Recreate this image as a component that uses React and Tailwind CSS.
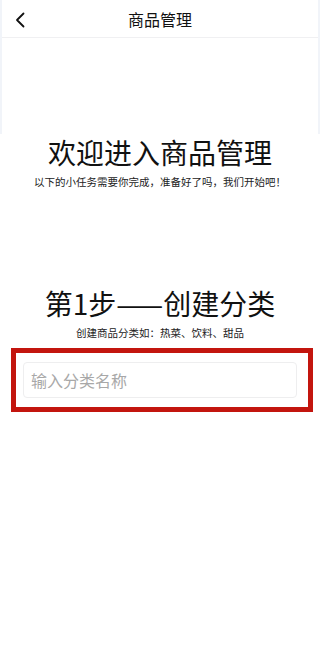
export default function App() {
  const font = { fontFamily: '"Noto Sans CJK SC", "Noto Sans", sans-serif' };

  return (
    <div className="w-[320px] min-h-[646px] bg-white text-[#111]" style={font}>
      {/* top area with faint frame */}
      <div className="border-x-2 border-[#f1f4f9]">
        <div className="relative h-[38px] flex items-center justify-center border-b border-[#f0f0f2]">
          <button className="absolute left-[12px] top-[12px] text-[#111]">
            <svg width="12" height="16" viewBox="0 0 12 16" fill="none">
              <path d="M9.5 1.5 L3 8 L9.5 14.5" stroke="#111" strokeWidth="1.8" strokeLinecap="round" strokeLinejoin="round" />
            </svg>
          </button>
          <h1 className="text-[16px] leading-none">商品管理</h1>
        </div>
        <div className="h-[96px]" />
      </div>

      {/* welcome */}
      <div className="flex flex-col items-center">
        <h2 className="text-[28px] leading-[36px] font-normal">欢迎进入商品管理</h2>
        <p className="mt-[5px] text-[10.5px] leading-[14px] text-[#222]">
          以下的小任务需要你完成，准备好了吗，我们开始吧！
        </p>
      </div>

      {/* step 1 */}
      <div className="mt-[96px] flex flex-col items-center">
        <h2 className="text-[28px] leading-[36px] font-normal">第1步——创建分类</h2>
        <p className="mt-[5px] text-[10.5px] leading-[14px] text-[#222]">
          创建商品分类如：热菜、饮料、甜品
        </p>
      </div>

      <div className="mt-[8px] ml-[11px] w-[302px] border-[5px] border-[#c3150e] pl-[7px] pr-[11px] py-[9px]">
        <input
          className="w-full h-[36px] rounded-[4px] border border-[#eeeeef] bg-white px-[7px] text-[16px] outline-none placeholder:text-[#a8a8a8]"
          placeholder="输入分类名称"
          style={font}
        />
      </div>
    </div>
  );
}
